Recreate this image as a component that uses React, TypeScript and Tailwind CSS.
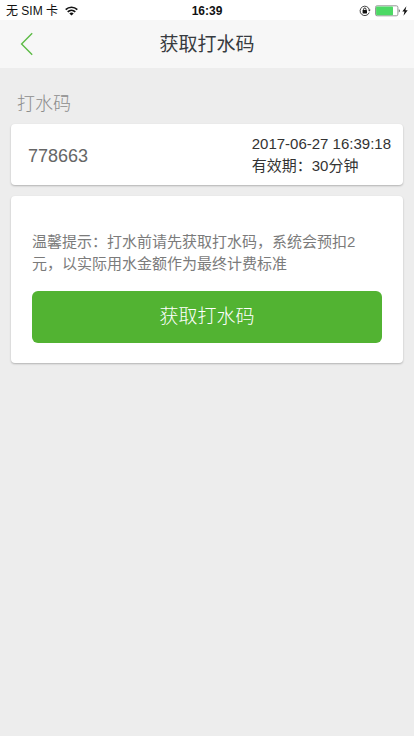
import React from 'react';

interface WaterCode {
  code: string;
  createdAt: string;
  validFor: string;
}

const current: WaterCode = {
  code: '778663',
  createdAt: '2017-06-27 16:39:18',
  validFor: '30分钟',
};

const WifiIcon: React.FC = () => (
  <svg width="13" height="10" viewBox="0 0 13 10" fill="none" stroke="#111" strokeWidth="1.6" aria-hidden="true">
    <path d="M0.7 3.6C4 0.4 9 0.4 12.3 3.6" />
    <path d="M2.7 5.9C4.9 3.8 8.1 3.8 10.3 5.9" />
    <path d="M6.5 9.6L4.3 7.5C5.6 6.3 7.4 6.3 8.7 7.5Z" fill="#111" stroke="none" />
  </svg>
);

const RotationLockIcon: React.FC = () => (
  <svg width="12" height="12" viewBox="0 0 12 12" fill="none" aria-hidden="true">
    <path d="M10.2 7.6A4.7 4.7 0 1 1 10.4 4.9" stroke="#333" strokeWidth="0.9" />
    <path d="M9 4.7H11.7L10.4 6.6Z" fill="#333" />
    <rect x="3.6" y="5" width="4.4" height="3.5" rx="0.4" fill="#111" />
    <path d="M4.6 5.2V4.2A1.2 1.2 0 0 1 7 4.2V5.2" stroke="#111" strokeWidth="0.9" />
  </svg>
);

const BatteryIcon: React.FC = () => (
  <svg width="26" height="12" viewBox="0 0 26 12" fill="none" aria-hidden="true">
    <rect x="0.5" y="0.8" width="22.4" height="10" rx="1.6" stroke="#8c8c8c" strokeWidth="0.9" />
    <rect x="1.1" y="1.4" width="16.9" height="8.8" rx="0.8" fill="#4cd964" />
    <path d="M23.8 4.2C25.2 4.6 25.2 7 23.8 7.4Z" fill="#555" />
  </svg>
);

const BoltIcon: React.FC = () => (
  <svg width="6" height="10" viewBox="0 0 6 10" aria-hidden="true">
    <path d="M4.4 0.3L0.3 5.5H2.5L1.5 9.7L5.7 4.2H3.4Z" fill="#111" />
  </svg>
);

const StatusBar: React.FC = () => (
  <div className="grid h-5 grid-cols-3 items-center bg-white px-1.5 pt-px text-xs text-[#111]">
    <div className="flex items-center gap-[7px]">
      <span>无 SIM 卡</span>
      <WifiIcon />
    </div>
    <span className="text-center font-bold">16:39</span>
    <div className="flex items-center justify-end gap-1">
      <RotationLockIcon />
      <span className="flex items-center gap-px">
        <BatteryIcon />
        <BoltIcon />
      </span>
    </div>
  </div>
);

const Header: React.FC<{ title: string }> = ({ title }) => (
  <header className="grid h-12 grid-cols-[1fr_auto_1fr] items-center bg-[#f7f7f7]">
    <button type="button" aria-label="返回" className="flex h-12 w-12 items-center pl-5">
      <svg width="14" height="24" viewBox="0 0 14 24" fill="none" stroke="#5dbb46" strokeWidth="1.4" aria-hidden="true">
        <path d="M12.2 1.2L1.6 12L12.2 22.8" />
      </svg>
    </button>
    <h1 className="pt-0.5 text-[19px] font-normal text-[#373b40]">{title}</h1>
  </header>
);

const Card: React.FC<{ className: string; children: React.ReactNode }> = ({ className, children }) => (
  <section className={`rounded bg-white shadow-[0_1px_2px_rgba(0,0,0,0.25)] ${className}`}>{children}</section>
);

const App: React.FC = () => {
  return (
    <div className="min-h-screen bg-[#ededed] font-['Liberation_Sans','Noto_Sans_CJK_SC',sans-serif]">
      <StatusBar />
      <Header title="获取打水码" />

      <main className="px-[11px] pt-6">
        <h2 className="pb-2 pl-1.5 text-lg leading-6 font-light text-[#8c8c8c]">打水码</h2>

        <Card className="flex items-center justify-between pt-[9px] pr-3 pb-2 pl-[17px]">
          <span className="pt-0.5 text-lg text-[#666]">{current.code}</span>
          <div className="text-[15px] leading-[22px] text-[#333]">
            <p>{current.createdAt}</p>
            <p>有效期：{current.validFor}</p>
          </div>
        </Card>

        <Card className="mt-[11px] px-[21px] pt-[35px] pb-5">
          <p className="text-[15px] leading-[22px] text-[#7b7b7b]">
            温馨提示：打水前请先获取打水码，系统会预扣2元，以实际用水金额作为最终计费标准
          </p>
          <button type="button" className="mt-4 h-[52px] w-full rounded-md bg-[#52b332] text-[19px] font-light text-white">
            获取打水码
          </button>
        </Card>
      </main>
    </div>
  );
};

export default App;
